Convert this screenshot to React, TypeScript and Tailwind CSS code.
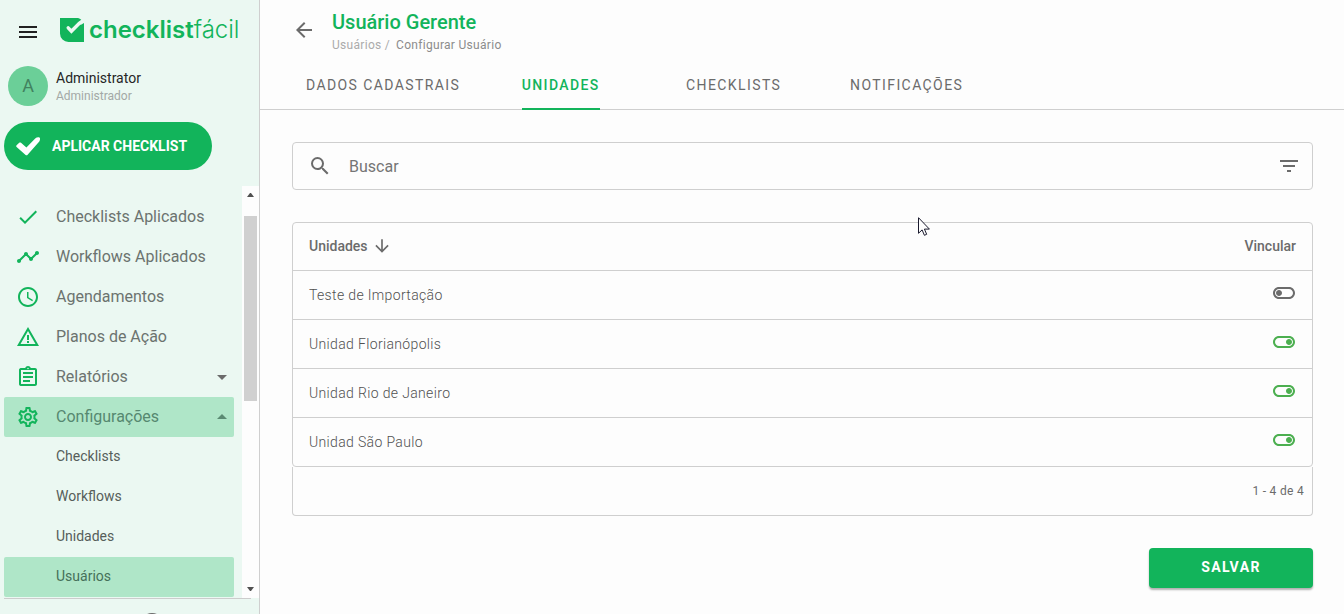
import React, { useState } from "react";
import {
  MdAccessTime,
  MdArrowBack,
  MdArrowDownward,
  MdArrowDropDown,
  MdArrowDropUp,
  MdCheck,
  MdFilterList,
  MdMenu,
  MdOutlineAssignment,
  MdOutlineSettings,
  MdOutlineToggleOff,
  MdOutlineToggleOn,
  MdSearch,
  MdTimeline,
  MdWarningAmber,
} from "react-icons/md";

const navItems = [
  { label: "Checklists Aplicados", icon: MdCheck },
  { label: "Workflows Aplicados", icon: MdTimeline },
  { label: "Agendamentos", icon: MdAccessTime },
  { label: "Planos de Ação", icon: MdWarningAmber },
  { label: "Relatórios", icon: MdOutlineAssignment, caret: "down" },
  { label: "Configurações", icon: MdOutlineSettings, caret: "up", active: true },
];

const subItems = [
  { label: "Checklists" },
  { label: "Workflows" },
  { label: "Unidades" },
  { label: "Usuários", active: true },
];

const tabs = ["DADOS CADASTRAIS", "UNIDADES", "CHECKLISTS", "NOTIFICAÇÕES"];

const initialUnits = [
  { name: "Teste de Importação", linked: false },
  { name: "Unidad Florianópolis", linked: true },
  { name: "Unidad Rio de Janeiro", linked: true },
  { name: "Unidad São Paulo", linked: true },
];

function Logo() {
  return (
    <div className="flex items-center gap-[5px] text-[#12b45b]">
      <svg viewBox="0 0 24 24" className="h-6 w-6" aria-hidden="true">
        <path
          fill="currentColor"
          d="M0 0h16.5c2.2 0 3.6.6 4.6 1.8L24 5v19H8.5A8.5 8.5 0 0 1 0 15.5z"
        />
        <path
          fill="none"
          stroke="#ebf8f2"
          strokeWidth="3.4"
          strokeLinecap="round"
          d="M8.2 9.8l3.2 3.4L19.6 5"
        />
        <path fill="#ebf8f2" d="M19 3.4L21.2 1.7 24 2v3l-3.4 2z" />
      </svg>
      <span className="font-['Inter'] text-2xl leading-6">
        <span className="font-semibold">checklist</span>
        <span className="font-light">fácil</span>
      </span>
    </div>
  );
}

function Sidebar() {
  return (
    <aside className="flex w-[260px] shrink-0 flex-col border-r border-[#cfcfcf] bg-[#ebf8f2]">
      <div className="flex h-15 shrink-0 items-center gap-5 pl-4">
        <button type="button" aria-label="Menu" className="pt-1 text-[#212121]">
          <MdMenu size={24} />
        </button>
        <Logo />
      </div>

      <div className="mt-1.5 flex shrink-0 items-center gap-2 px-2">
        <div className="flex h-10 w-10 items-center justify-center rounded-full bg-[#6bcf98] text-lg text-[#41825f]">
          A
        </div>
        <div>
          <p className="text-sm leading-5 text-[#262626]">Administrator</p>
          <p className="text-xs leading-4 text-[#a3a9a6]">Administrador</p>
        </div>
      </div>

      <button
        type="button"
        className="mt-4 ml-1 flex h-12 w-52 shrink-0 items-center gap-3 rounded-full bg-[#12b45b] pl-3 text-sm font-bold text-white"
      >
        <svg viewBox="0 0 24 24" className="h-6 w-6" aria-hidden="true">
          <path
            fill="currentColor"
            d="M.6 11.2l2.6-2.4c.6-.5 1.2-.5 1.8 0l5.4 4.6 8.8-9c1.2-1 3.4-1.4 4.5-.7.6.4.4 2.8-.4 3.9L11.6 20.800c-.6.7-1.400.7-2 .1L.6 13c-.6-.6-.6-1.200 0-1.800z"
          />
        </svg>
        APLICAR CHECKLIST
      </button>

      <div className="mt-4 flex min-h-0 flex-1">
        <nav className="min-w-0 flex-1 overflow-hidden pt-[11px] pr-2 pl-1">
          {navItems.map(({ label, icon: Icon, caret, active }) => (
            <a
              key={label}
              href="#"
              className={`flex h-10 items-center rounded-xs pl-3 text-base ${
                active ? "bg-[#afe6c8] text-[#568870]" : "text-[#6b736f]"
              }`}
            >
              <Icon size={24} className="text-[#12b45b]" />
              <span className="ml-4 flex-1">{label}</span>
              {caret === "down" && <MdArrowDropDown size={24} className="text-[#6b6b6b]" />}
              {caret === "up" && <MdArrowDropUp size={24} className="text-[#5a8a72]" />}
            </a>
          ))}
          {subItems.map(({ label, active }) => (
            <a
              key={label}
              href="#"
              className={`flex h-10 items-center rounded-xs pb-0.5 pl-[52px] text-sm ${
                active ? "bg-[#afe6c8] text-[#457059]" : "text-[#565e5a]"
              }`}
            >
              {label}
            </a>
          ))}
        </nav>
        {/* scrollbar */}
        <div className="flex w-[17px] flex-col items-center bg-[#fdfdfd]" aria-hidden="true">
          <svg viewBox="0 0 7 4" className="my-[7px] h-1 w-[7px] fill-[#505050]">
            <path d="M3 0h1l3 4H0z" />
          </svg>
          <div className="mt-3 h-[185px] w-[13px] bg-[#d0d0d0]" />
          <svg viewBox="0 0 7 4" className="mt-auto mb-[7px] h-1 w-[7px] fill-[#505050]">
            <path d="M0 0h7L4 4H3z" />
          </svg>
        </div>
      </div>

      <div className="mr-2 ml-1 flex h-4 shrink-0 justify-center overflow-hidden border-t border-[#cccccc] pt-3.5 pl-12">
        <span className="h-6 w-6 shrink-0 rounded-full border-2 border-[#6b6b6b]" />
      </div>
    </aside>
  );
}

export default function App() {
  const [tab, setTab] = useState("UNIDADES");
  const [units, setUnits] = useState(initialUnits);

  const toggle = (name: string) =>
    setUnits((prev) => prev.map((u) => (u.name === name ? { ...u, linked: !u.linked } : u)));

  return (
    <div className="flex h-screen overflow-hidden bg-[#fdfdfd] font-['Roboto',sans-serif] text-[#6b6b6b]">
      <Sidebar />

      <main className="min-w-0 flex-1">
        <header className="border-b border-[#cfcfcf] pt-2.5">
          <div className="flex items-start gap-4 px-8">
            <a href="#" aria-label="Voltar" className="mt-2">
              <MdArrowBack size={24} />
            </a>
            <div>
              <h1 className="text-xl leading-6 font-medium text-[#12b45b]">Usuário Gerente</h1>
              <p className="flex gap-1.5 text-xs leading-[22px] tracking-wide text-[#8c8c8c]">
                <span className="text-[#ababab]">
                  <a href="#">Usuários</a> /
                </span>
                <span>Configurar Usuário</span>
              </p>
            </div>
          </div>
          <div role="tablist" className="-mb-px ml-8 flex">
            {tabs.map((t) => (
              <button
                key={t}
                type="button"
                role="tab"
                aria-selected={tab === t}
                onClick={() => setTab(t)}
                className="flex min-w-[173px] justify-center px-3.5 text-sm"
              >
                <span
                  className={`h-[54px] border-b-2 pt-[19px] leading-5 tracking-widest ${
                    tab === t
                      ? "border-[#12b45b] font-medium text-[#12b45b]"
                      : "border-transparent"
                  }`}
                >
                  {t}
                </span>
              </button>
            ))}
          </div>
        </header>

        <div className="flex flex-col pt-8 pr-[31px] pl-8">
          <div className="flex h-12 items-center rounded border border-[#cfcfcf] pr-[11px] pl-[15px]">
            <MdSearch size={24} />
            <input
              type="text"
              aria-label="Buscar"
              placeholder="Buscar"
              className="ml-[17px] min-w-0 flex-1 bg-transparent pt-0.5 text-base outline-none placeholder:text-[#757575]"
            />
            <button type="button" aria-label="Filtrar">
              <MdFilterList size={24} />
            </button>
          </div>

          <div className="mt-8 rounded border border-[#cfcfcf]">
            <table className="w-full border-separate border-spacing-0">
              <thead>
                <tr className="text-sm">
                  <th className="h-12 border-b border-[#cfcfcf] px-4 pb-0.5 text-left font-medium">
                    <button type="button" className="flex items-center gap-1">
                      Unidades
                      <MdArrowDownward size={20} />
                    </button>
                  </th>
                  <th className="h-12 border-b border-[#cfcfcf] px-4 pb-0.5 text-right font-medium">
                    Vincular
                  </th>
                </tr>
              </thead>
              <tbody className="[&>tr:last-child>td]:h-12 [&>tr:last-child>td]:border-b-0">
                {units.map((u) => (
                  <tr key={u.name} className="text-sm font-light tracking-wide text-[#505050]">
                    <td className="h-[49px] border-b border-[#cfcfcf] px-4">{u.name}</td>
                    <td className="h-[49px] border-b border-[#cfcfcf] px-4 pb-1">
                      <label className="relative ml-auto block w-6 cursor-pointer">
                        <input
                          type="checkbox"
                          aria-label={`Vincular ${u.name}`}
                          checked={u.linked}
                          onChange={() => toggle(u.name)}
                          className="sr-only"
                        />
                        {u.linked ? (
                          <MdOutlineToggleOn size={24} className="text-[#4caf50]" />
                        ) : (
                          <MdOutlineToggleOff size={24} className="text-[#6b6b6b]" />
                        )}
                      </label>
                    </td>
                  </tr>
                ))}
              </tbody>
            </table>
          </div>
          <div className="flex h-[49px] items-center justify-end rounded-b border border-t-0 border-[#cfcfcf] pr-2 text-xs tracking-wide">
            1 - 4 de 4
          </div>

          <button
            type="button"
            className="mt-8 h-10 w-[164px] self-end rounded bg-[#12b45b] pb-0.5 text-sm font-bold tracking-widest text-white shadow-[0_2px_2px_rgba(0,0,0,0.3)]"
          >
            SALVAR
          </button>
        </div>
      </main>

      {/* mouse pointer */}
      <svg
        viewBox="0 0 12 19"
        className="pointer-events-none absolute top-[217px] left-[918px] h-[19px] w-3"
        aria-hidden="true"
      >
        <path
          d="M.5.7v15.6l3.6-3.4 2.3 5.400 2.300-1-2.300-5.200h5z"
          fill="#fff"
          stroke="#1a1a2e"
          strokeWidth="1"
        />
      </svg>
    </div>
  );
}
